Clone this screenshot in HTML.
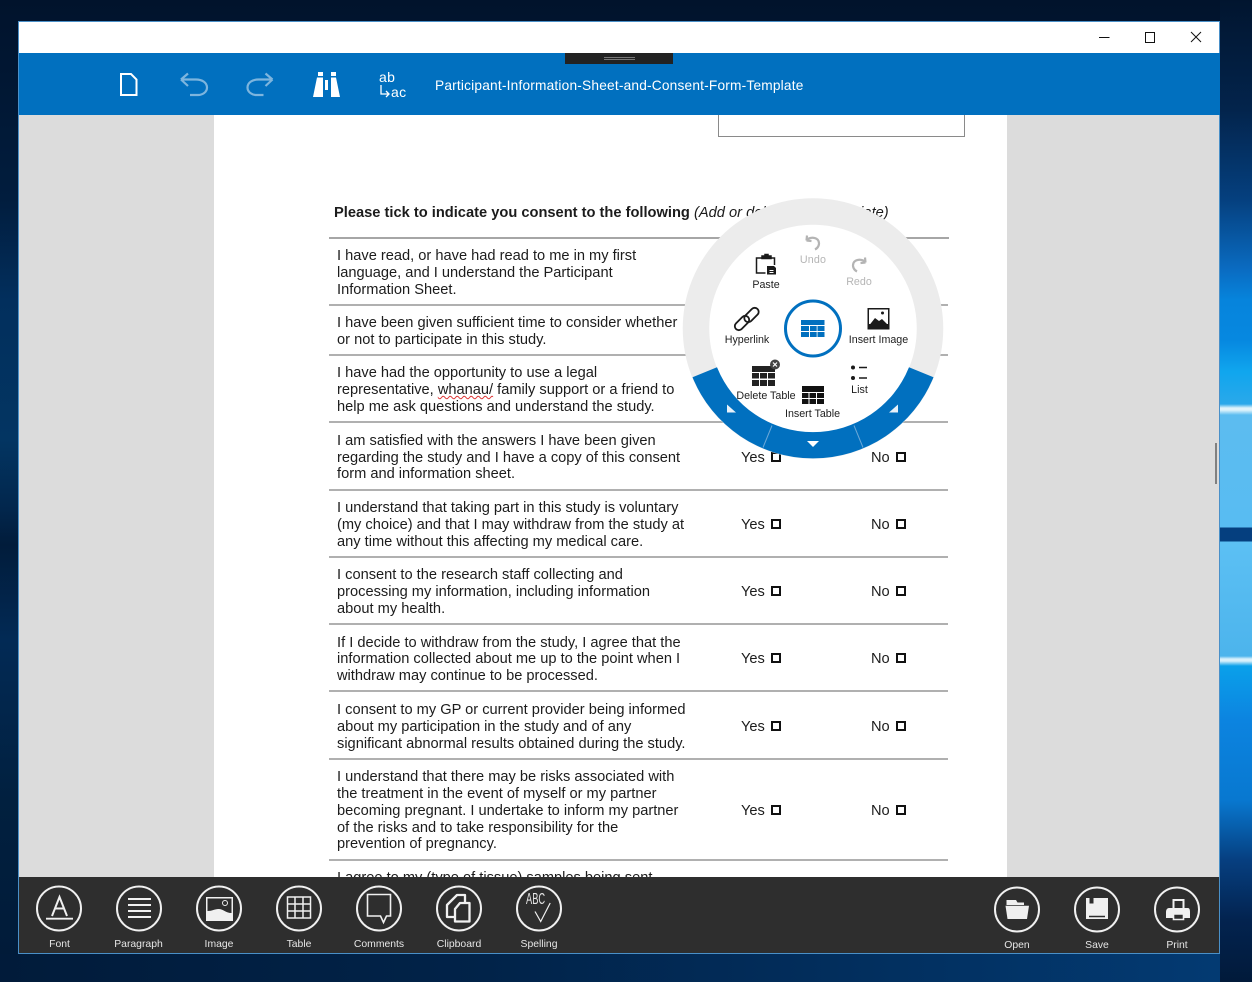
<!DOCTYPE html>
<html><head><meta charset="utf-8"><style>
html,body{margin:0;padding:0}
body{width:1252px;height:982px;position:relative;overflow:hidden;background:#011b3d;font-family:"Liberation Sans",sans-serif}
div{position:absolute}
.t{white-space:nowrap;font-size:14.64px;color:#1c1c1c;line-height:17px;left:337px;margin-top:1px}
.l{left:329px;width:619px;height:2px;background:#b0b0b0;margin-top:-1px}
.yn{white-space:nowrap;font-size:14.64px;color:#1c1c1c;line-height:17px;margin-top:2px}
.cb{width:6px;height:6px;border:2px solid #111;margin-top:1px}
.lb{white-space:nowrap;font-size:10.4px;color:#e6e6e6;line-height:13px;transform:translateX(-50%);top:938px}
.r{white-space:nowrap;font-size:10.7px;color:#1e1e1e;line-height:13px;transform:translateX(-50%);margin-top:1px}
</style></head><body>
<div style="left:0;top:0;width:1252px;height:982px;background:linear-gradient(180deg,#01132c 0,#011d3e 200px,#022f5d 300px,#033562 440px,#02264c 510px,#011c3b 545px,#022a55 640px,#01203f 800px,#011a38 982px)"></div>
<div style="left:1220px;top:0;width:32px;height:982px;background:linear-gradient(180deg,#01152f 0,#03244c 110px,#05407f 200px,#0a6cc2 270px,#0684dc 300px,#0688e0 340px,#10a6ee 372px,#2aa8ea 404px,#dff3fb 408px,#dff3fb 410px,#5cbcf0 415px,#58bcf2 527px,#053f7f 528px,#053f7f 541px,#5cc0f4 542px,#4cb4ec 656px,#d8f0fb 659px,#d8f0fb 661px,#0aa0ea 666px,#0c84e0 720px,#0878d0 800px,#063f80 860px,#03234f 920px,#011a3a 982px)"></div>
<div style="left:0;top:954px;width:1220px;height:28px;background:linear-gradient(90deg,#011b3a,#012349 40%,#033a72 100%)"></div>

<!-- window -->
<div style="left:18px;top:21px;width:1202px;height:933px;background:#4a90c8"></div>
<div style="left:19px;top:22px;width:1200px;height:31px;background:#fff"></div>
<div style="left:19px;top:53px;width:1201px;height:62px;background:#0170bf"></div>
<div style="left:19px;top:115px;width:1200px;height:762px;background:#dcdcdc"></div>
<div style="left:214px;top:115px;width:793px;height:762px;background:#fff"></div>
<div style="left:1215px;top:443px;width:2px;height:41px;background:#808080"></div>

<!-- caption buttons -->
<svg style="position:absolute;left:1090px;top:25px" width="120" height="24" fill="none" stroke="#111" stroke-width="1"><path d="M9 12.5H19.5"/><path d="M55.5 7.5h9v10h-9z" /><path d="M101 7l10 10M111 7l-10 10"/></svg>

<!-- handle -->
<div style="left:565px;top:53px;width:108px;height:11px;background:#222"></div>
<div style="left:604px;top:57px;width:31px;height:1px;background:#777"></div>
<div style="left:604px;top:59px;width:31px;height:1px;background:#777"></div>

<!-- toolbar icons -->
<svg style="position:absolute;left:100px;top:60px" width="320" height="50" fill="none">
<path d="M21 14h10l5.500 5.500V35H21z" stroke="#fff" stroke-width="2"/>
<g stroke="#7db5de" stroke-width="2.200"><path d="M81 19.500l7-6M81 19.500l7 6.500M81 19.500h15c6 0 11 3 11 8s-5 7.500-9 7.500h-8"/>
<path d="M172.500 19.500l-7-6M172.500 19.500l-7 6.500M172.500 19.500h-14c-6 0-11 3-11 8s5 7.500 9 7.500h7"/></g>
<path d="M218 12h5v4h-5zM231 12h5v4h-5zM217 17.500h6V37h-10zM231 17.500h5l4 19.500h-9zM225 20h3v10h-3z" fill="#fff"/>
<path d="M281 25v9h8M286 31l3 3-3 3" stroke="#fff" stroke-width="1.300"/>
</svg>
<div style="left:379px;top:70px;font-size:14px;line-height:14px;color:#fff;letter-spacing:.4px">ab</div>
<div style="left:391px;top:85px;font-size:14px;line-height:14px;color:#fff;letter-spacing:.4px">ac</div>
<div style="left:435px;top:78px;font-size:13.7px;line-height:16px;color:#fff;white-space:nowrap;letter-spacing:.2px">Participant-Information-Sheet-and-Consent-Form-Template</div>

<!-- document -->
<div style="left:718px;top:115px;width:245px;height:21px;border:1px solid #8a8a8a;border-top:0;box-sizing:content-box"></div>
<div class="t" style="left:334px;top:204px;font-weight:bold;font-size:14.67px">Please tick to indicate you consent to the following <span style="font-weight:normal;font-style:italic">(Add or delete as appropriate)</span></div>

<div class="l" style="top:238px;width:620px;background:#a6a6a6"></div>
<div class="t" style="top:247px">I have read, or have had read to me in my first</div>
<div class="t" style="top:264px">language, and I understand the Participant</div>
<div class="t" style="top:281px">Information Sheet.</div>
<div class="l" style="top:305px"></div>
<div class="t" style="top:314px">I have been given sufficient time to consider whether</div>
<div class="t" style="top:331px">or not to participate in this study.</div>
<div class="l" style="top:355px"></div>
<div class="t" style="top:364px">I have had the opportunity to use a legal</div>
<div class="t" style="top:381px">representative, <span style="text-decoration:underline wavy #d33;text-decoration-thickness:1px;text-underline-offset:1px">whanau/</span> family support or a friend to</div>
<div class="t" style="top:398px">help me ask questions and understand the study.</div>
<div class="l" style="top:422px"></div>
<div class="t" style="top:432px">I am satisfied with the answers I have been given</div>
<div class="t" style="top:449px">regarding the study and I have a copy of this consent</div>
<div class="t" style="top:465px">form and information sheet.</div>
<div class="l" style="top:490px"></div>
<div class="t" style="top:499px">I understand that taking part in this study is voluntary</div>
<div class="t" style="top:516px">(my choice) and that I may withdraw from the study at</div>
<div class="t" style="top:533px">any time without this affecting my medical care.</div>
<div class="l" style="top:557px"></div>
<div class="t" style="top:566px">I consent to the research staff collecting and</div>
<div class="t" style="top:583px">processing my information, including information</div>
<div class="t" style="top:600px">about my health.</div>
<div class="l" style="top:624px"></div>
<div class="t" style="top:634px">If I decide to withdraw from the study, I agree that the</div>
<div class="t" style="top:650px">information collected about me up to the point when I</div>
<div class="t" style="top:667px">withdraw may continue to be processed.</div>
<div class="l" style="top:691px"></div>
<div class="t" style="top:701px">I consent to my GP or current provider being informed</div>
<div class="t" style="top:718px">about my participation in the study and of any</div>
<div class="t" style="top:735px">significant abnormal results obtained during the study.</div>
<div class="l" style="top:759px"></div>
<div class="t" style="top:768px">I understand that there may be risks associated with</div>
<div class="t" style="top:785px">the treatment in the event of myself or my partner</div>
<div class="t" style="top:802px">becoming pregnant. I undertake to inform my partner</div>
<div class="t" style="top:819px">of the risks and to take responsibility for the</div>
<div class="t" style="top:835px">prevention of pregnancy.</div>
<div class="l" style="top:860px"></div>
<div class="t" style="top:869px">I agree to my (type of tissue) samples being sent</div>

<div class="yn" style="left:741px;top:448px">Yes</div><div class="cb" style="left:771px;top:451px"></div><div class="yn" style="left:871px;top:448px">No</div><div class="cb" style="left:896px;top:451px"></div>
<div class="yn" style="left:741px;top:515px">Yes</div><div class="cb" style="left:771px;top:518px"></div><div class="yn" style="left:871px;top:515px">No</div><div class="cb" style="left:896px;top:518px"></div>
<div class="yn" style="left:741px;top:582px">Yes</div><div class="cb" style="left:771px;top:585px"></div><div class="yn" style="left:871px;top:582px">No</div><div class="cb" style="left:896px;top:585px"></div>
<div class="yn" style="left:741px;top:649px">Yes</div><div class="cb" style="left:771px;top:652px"></div><div class="yn" style="left:871px;top:649px">No</div><div class="cb" style="left:896px;top:652px"></div>
<div class="yn" style="left:741px;top:717px">Yes</div><div class="cb" style="left:771px;top:720px"></div><div class="yn" style="left:871px;top:717px">No</div><div class="cb" style="left:896px;top:720px"></div>
<div class="yn" style="left:741px;top:801px">Yes</div><div class="cb" style="left:771px;top:804px"></div><div class="yn" style="left:871px;top:801px">No</div><div class="cb" style="left:896px;top:804px"></div>

<!-- radial menu -->
<svg style="position:absolute;left:0;top:0" width="1252" height="982" fill="none">
<circle cx="813" cy="328.500" r="117" stroke="#ececec" stroke-width="26.500" fill="#fff"/>
<path d="M692.500 377.200A130 130 0 0 0 933.500 377.200L909 367.300A103.500 103.500 0 0 1 717 367.300Z" fill="#0170bf"/>
<path d="M772 425.500L763 447.500M854 425.500L863 447.500" stroke="#6ba8d8" stroke-width="1"/>
<path d="M727 404.500l9 8h-9zM898 404.500l-9 8h9z" fill="#e8f1f9"/>
<path d="M807 441h12l-6 6z" fill="#fff"/>
<circle cx="813" cy="328.500" r="27.500" stroke="#0170bf" stroke-width="3" fill="#fff"/>
<path d="M801 320h23.500v5h-23.500zM801 326h8v5h-8zM810 326h6.700v5h-6.700zM817.500 326h7v5h-7zM801 332h8v5h-8zM810 332h6.700v5h-6.700zM817.500 332h7v5h-7z" fill="#0170bf"/>
<!-- undo redo -->
<g stroke="#b4b4b4" stroke-width="2.200"><path d="M806.500 240.500l.5 -5M806.500 240.500l5 .5M806.500 240.500c3-4 10-3.500 12 .5 1.500 3.500-.5 7-3.500 8.500"/>
<path d="M865.500 262.500l-.5-5M865.500 262.500l-5 .5M865.500 262.500c-3-4-10-3.500-12 .5-1.500 3.500.5 7 3.500 8.500"/></g>
<!-- paste -->
<g stroke="#1a1a1a" stroke-width="1.500"><path d="M762 258h-5.500v15h9M771 258h3.500v7"/><path d="M762 258.500v-2.500h3v-1.500h3v1.500h3v2.500z" fill="#1a1a1a"/></g>
<path d="M767 266h7l2 2v6.500h-9z" fill="#1a1a1a"/><path d="M769.500 270.500h4M769.500 272.500h4" stroke="#fff"/>
<!-- hyperlink -->
<g stroke="#1a1a1a" stroke-width="1.800"><rect x="-4" y="-8.500" width="8" height="17" rx="4" transform="translate(751.500 315) rotate(45)"/><rect x="-4" y="-8.500" width="8" height="17" rx="4" transform="translate(742 323) rotate(45)"/></g>
<!-- image -->
<rect x="867.500" y="308" width="22" height="21.500" fill="#1a1a1a"/><rect x="869" y="309.500" width="19" height="14.500" fill="#fff"/>
<path d="M869.500 325l5.500-7 4 3 3-2 6 6z" fill="#1a1a1a"/><circle cx="882.500" cy="313" r="1.500" fill="#1a1a1a"/>
<!-- list -->
<circle cx="853" cy="367.500" r="2" fill="#1a1a1a"/><circle cx="853" cy="378" r="2" fill="#1a1a1a"/><path d="M859 367.500h8M859 378h8" stroke="#1a1a1a" stroke-width="1.500"/>
<!-- delete table -->
<path d="M752 366h23v6h-23zM752 373h7v5.500h-7zM760 373h7v5.500h-7zM768 373h7v5.500h-7zM752 380h7v6h-7zM760 380h7v6h-7zM768 380h7v6h-7z" fill="#222"/>
<circle cx="775" cy="364.500" r="5" fill="#444"/><path d="M773 362.500l4 4M777 362.500l-4 4" stroke="#fff" stroke-width="1.200"/>
<!-- insert table -->
<path d="M802 386h22v6h-22zM802 393h6.500v5h-6.500zM809.500 393h6.500v5h-6.500zM817 393h7v5h-7zM802 399h6.500v5h-6.500zM809.500 399h6.500v5h-6.500zM817 399h7v5h-7z" fill="#111"/>
</svg>
<div class="r" style="left:813px;top:253px;color:#b5b5b5;letter-spacing:.2px">Undo</div>
<div class="r" style="left:859px;top:275px;color:#b5b5b5">Redo</div>
<div class="r" style="left:766px;top:278px">Paste</div>
<div class="r" style="left:747px;top:333px">Hyperlink</div>
<div class="r" style="left:878.500px;top:333px">Insert Image</div>
<div class="r" style="left:859.500px;top:383px">List</div>
<div class="r" style="left:766px;top:389px">Delete Table</div>
<div class="r" style="left:812.500px;top:407px">Insert Table</div>

<!-- bottom bar -->
<div style="left:19px;top:877px;width:1200px;height:76px;background:#2e2e2e"></div>
<svg style="position:absolute;left:0;top:870px" width="1252" height="100" fill="none" stroke="#f0f0f0" stroke-width="2">
<circle cx="59" cy="38.500" r="22"/><circle cx="139" cy="38.500" r="22"/><circle cx="219" cy="38.500" r="22"/><circle cx="299" cy="38.500" r="22"/><circle cx="379" cy="38.500" r="22"/><circle cx="459" cy="38.500" r="22"/><circle cx="539" cy="38.500" r="22"/>
<circle cx="1017" cy="39.500" r="22"/><circle cx="1097" cy="39.500" r="22"/><circle cx="1177" cy="39.500" r="22"/>
<!-- font -->
<path d="M46 48.700h27" stroke-width="1.800"/><path d="M52 46l7.500-19 7.500 19M54.500 38.500h10" stroke-width="2"/>
<!-- para -->
<path d="M128 29h23M128 35h23M128 41h23M128 47h23" stroke-width="2"/>
<!-- image -->
<path d="M206 27h27v24h-27z" fill="#f0f0f0" stroke="none"/><path d="M207.500 28.500h24v14.500c-6 0-8-4-13-4-4 0-6 2-11 2z" fill="#2e2e2e" stroke="none"/><circle cx="225" cy="33" r="2.500" stroke-width="1"/>
<!-- table -->
<path d="M287.500 27h23v21h-23zM295 27v21M303 27v21M287.500 34h23M287.500 41h23" stroke-width="1.500"/>
<!-- comments -->
<path d="M367.500 24.500h23v21.500h-4l-3 6.500-3-6.500h-13z" stroke-width="1.600"/>
<!-- clipboard -->
<path d="M465 32v-7h-8l-10 10v12h7" stroke-width="2.300" stroke-linejoin="round"/><path d="M460 33h9.500v18.500H455V39z" stroke-width="2.300" stroke-linejoin="round"/>
<!-- spelling -->
<path d="M535 41.500l5.700 10 9.500-18.500" stroke-width="1.200"/>
<!-- open -->
<path d="M1006.500 30h9.500l1.500 2.500h6.500v2.500h-17.500z" fill="#f0f0f0" stroke="none"/><path d="M1005.500 35.800h23.500l-2 13.200h-19.500z" fill="#f0f0f0" stroke="none"/>
<!-- save -->
<path d="M1086 28h22v21h-22z" fill="#f0f0f0" stroke="none"/><path d="M1089.500 28h4v5.500h-4z" fill="#2e2e2e" stroke="none"/><path d="M1089 46.500h16" stroke="#2e2e2e" stroke-width="1.500"/>
<!-- print -->
<path d="M1173.500 30h10v9h-10z" stroke-width="2"/><path d="M1169 38h19c1.500 0 2 2 2 4v6h-24v-6c0-2 1-4 3-4z" fill="#f0f0f0" stroke="none"/><path d="M1173.500 44h10v5.500h-10z" fill="#2e2e2e" stroke="#f0f0f0" stroke-width="1.600"/>
</svg>
<div style="left:526px;top:892px;font-size:16px;line-height:16px;color:#e6e6e6;white-space:nowrap;transform:scaleX(.58);transform-origin:0 0;width:40px">ABC</div>
<div class="lb" style="left:59.500px">Font</div>
<div class="lb" style="left:138.500px">Paragraph</div>
<div class="lb" style="left:219px">Image</div>
<div class="lb" style="left:299px">Table</div>
<div class="lb" style="left:379px">Comments</div>
<div class="lb" style="left:459px">Clipboard</div>
<div class="lb" style="left:539px">Spelling</div>
<div class="lb" style="left:1017px;top:939px">Open</div>
<div class="lb" style="left:1097px;top:939px">Save</div>
<div class="lb" style="left:1177px;top:939px">Print</div>
</body></html>
